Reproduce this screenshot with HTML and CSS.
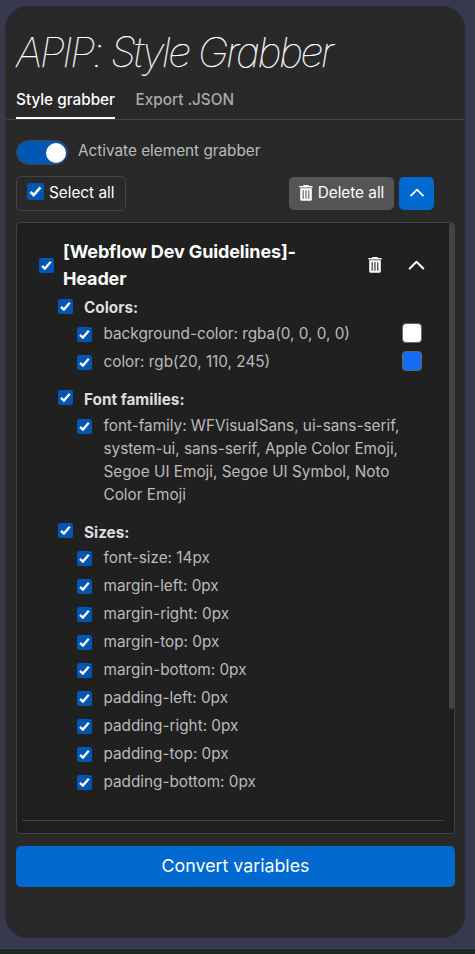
FILE: index.html
```html
<!DOCTYPE html>
<html lang="en">
<head>
<meta charset="utf-8">
<title>APIP: Style Grabber</title>
<link rel="stylesheet" href="styles.css">
</head>
<body>
<svg class="defs" width="0" height="0">
  <symbol id="check" viewBox="0 0 15 15"><path d="M3 7.8 5.9 10.6 11.8 3.8" fill="none" stroke="#fff" stroke-width="2.3"/></symbol>
  <symbol id="trash" viewBox="0 0 14 16"><path fill="currentColor" fill-rule="evenodd" d="M4.6 0h4.8l.6 1h3.1q.6 0 .6.6v.9H.3v-.9Q.3 1 .9 1H4zM1.2 3.3h11.6v11q0 1.5-1.5 1.5H2.7q-1.5 0-1.5-1.5zM3.6 5.3v8.4h1.1V5.3zm2.8 0v8.4h1.1V5.3zm2.8 0v8.4h1.1V5.3z"/></symbol>
  <symbol id="up" viewBox="0 0 16 10"><path d="M1.2 8.5 8 1.8l6.8 6.7" fill="none" stroke="currentColor" stroke-width="2" stroke-linecap="round" stroke-linejoin="round"/></symbol>
</svg>
<main class="card">
  <h1 class="title">APIP: Style Grabber</h1>
  <nav class="tabs"><a class="tab active">Style grabber</a><a class="tab">Export .JSON</a></nav>
  <div class="activate"><span class="switch"><i class="knob"></i></span><span>Activate element grabber</span></div>
  <div class="toolbar">
    <label class="select-all"><svg class="cb large"><use href="#check"/></svg>Select all</label>
    <button class="btn delete"><svg class="trash"><use href="#trash"/></svg>Delete all</button>
    <button class="btn collapse"><svg class="up"><use href="#up"/></svg></button>
  </div>
  <section class="panel">
    <div class="thumb"></div>
    <header class="item-head">
      <svg class="cb"><use href="#check"/></svg>
      <h2 class="item-name">[Webflow Dev Guidelines]-<br>Header</h2>
      <svg class="trash"><use href="#trash"/></svg>
      <svg class="up wide"><use href="#up"/></svg>
    </header>
    <h3 class="group"><svg class="cb"><use href="#check"/></svg><span>Colors:</span></h3>
    <div class="row"><svg class="cb"><use href="#check"/></svg><span class="text">background-color: rgba(0, 0, 0, 0)</span><i class="swatch white"></i></div>
    <div class="row"><svg class="cb"><use href="#check"/></svg><span class="text">color: rgb(20, 110, 245)</span><i class="swatch blue"></i></div>
    <h3 class="group spaced"><svg class="cb"><use href="#check"/></svg><span>Font families:</span></h3>
    <div class="row"><svg class="cb"><use href="#check"/></svg><span class="text">font-family: WFVisualSans, ui-sans-serif,<br>system-ui, sans-serif, Apple Color Emoji,<br>Segoe UI Emoji, Segoe UI Symbol, Noto<br>Color Emoji</span></div>
    <h3 class="group spaced sizes"><svg class="cb"><use href="#check"/></svg><span>Sizes:</span></h3>
    <div class="row"><svg class="cb"><use href="#check"/></svg><span class="text">font-size: 14px</span></div>
    <div class="row"><svg class="cb"><use href="#check"/></svg><span class="text">margin-left: 0px</span></div>
    <div class="row"><svg class="cb"><use href="#check"/></svg><span class="text">margin-right: 0px</span></div>
    <div class="row"><svg class="cb"><use href="#check"/></svg><span class="text">margin-top: 0px</span></div>
    <div class="row"><svg class="cb"><use href="#check"/></svg><span class="text">margin-bottom: 0px</span></div>
    <div class="row"><svg class="cb"><use href="#check"/></svg><span class="text">padding-left: 0px</span></div>
    <div class="row"><svg class="cb"><use href="#check"/></svg><span class="text">padding-right: 0px</span></div>
    <div class="row"><svg class="cb"><use href="#check"/></svg><span class="text">padding-top: 0px</span></div>
    <div class="row"><svg class="cb"><use href="#check"/></svg><span class="text">padding-bottom: 0px</span></div>
    <hr class="divider">
  </section>
  <button class="btn convert">Convert variables</button>
</main>
<footer class="strip"></footer>
</body>
</html>
```
FILE: styles.css
```css
* { box-sizing: border-box; }
body {
  margin: 0; height: 954px; padding: 6px 10px 0 5px; overflow: hidden;
  display: flex; flex-direction: column;
  background: #39394d; color: #bbb;
  font: 15.3px/23px Inter, "Liberation Sans", sans-serif;
}
.defs { position: absolute; }
svg { display: block; flex: none; }
.card {
  height: 932px; flex: none; padding: 21px 10px 0 11px; border-radius: 23px;
  background: #292929; box-shadow: 0 0 0 1px #2c2b3c inset;
}
.strip { margin: 10px -10px 0 -5px; height: 6px; flex: none; background: #1c2626; border-top: 1px solid #3b4447; }
.title {
  margin: 0; height: 51px; font-size: 41.3px; line-height: 50px; font-style: italic;
  font-weight: 100; letter-spacing: -2.55px; word-spacing: .5px; -webkit-text-stroke: .25px #fff;
  color: #fff; white-space: nowrap;
}
.tabs { display: flex; gap: 20.5px; height: 42px; margin: 0 -9px 0 -10px; padding: 10px 10px 0; border-bottom: 1px solid #444; }
.tab { height: 31px; font-weight: 500; color: #aaa; white-space: nowrap; }
.tab.active { color: #fff; border-bottom: 2px solid #fff; }
.activate { display: flex; gap: 10px; margin-top: 19px; height: 26px; }
.switch { width: 52px; height: 25px; margin-top: 1px; padding: 1px; border: 1px solid #444; border-radius: 13px; background: #0056b3; display: flex; justify-content: flex-end; align-items: center; }
.knob { width: 20px; height: 20px; border-radius: 50%; background: #fff; }
.toolbar { display: flex; align-items: center; height: 35px; margin: 11px 21px 0 0; color: #fff; }
.select-all { display: flex; align-items: center; gap: 5px; width: 110px; height: 35px; padding: 0 0 2px 10px; border: 1px solid #444; border-radius: 5px; white-space: nowrap; }
.btn { display: flex; align-items: center; justify-content: center; padding: 0; border: 0; border-radius: 5px; color: #fff; font: inherit; height: 33px; }
.delete { width: 105px; gap: 5px; margin-left: auto; background: #555; padding-bottom: 2px; }
.collapse { width: 35px; margin-left: 5px; background: #0069d0; padding-bottom: 3px; }
.cb { width: 15px; height: 15px; border-radius: 2px; background: #0056b3; }
.cb.large { width: 17px; height: 17px; margin-top: -2px; }
.trash { width: 14px; height: 16px; color: #fff; }
.up { width: 14px; height: 9px; color: #fff; }
.up.wide { width: 17px; height: 10px; }
.panel {
  position: relative; height: 612px; margin-top: 11px; padding: 15px 11px 0 5px;
  border: 1px solid #444; border-radius: 5px; background: #202020;
  box-shadow: inset 0 0 5px #1a1a1a;
}
.thumb { position: absolute; top: 0; right: 0; width: 5px; height: 486px; border-radius: 3px; background: #444; }
.item-head { display: flex; align-items: center; height: 54px; padding: 0 18px 0 17px; }
.item-name { margin: 0 auto 0 9px; font-size: 18px; line-height: 27px; font-weight: 700; letter-spacing: -.13px; color: #fff; white-space: nowrap; }
.item-head .trash { margin-right: 26px; }
.group { display: flex; gap: 11px; height: 28px; margin: 0; padding: 7px 0 0 36px; font-size: 15.3px; line-height: 19px; font-weight: 700; color: #ddd; }
.group.spaced { margin-top: 8px; }
.group.spaced .cb { margin-top: -1px; }
.group span { margin-top: -1px; }
.group.sizes span, .group.sizes .cb { margin-top: 0; }
.row { display: flex; gap: 11.5px; min-height: 28px; padding: 2px 21px 2px 55px; }
.row .cb { margin-top: 5px; }
.row .text { margin-right: auto; white-space: nowrap; }
.swatch { width: 20px; height: 20px; margin-top: 1px; border: 1px solid #666; border-radius: 4px; }
.swatch.white { background: #fff; }
.swatch.blue { background: #146ef5; }
.divider { height: 1px; margin: 24px 0 0; border: 0; background: #444; }
.convert { width: 439px; height: 41px; margin-top: 12px; padding-bottom: 2px; background: #0069d0; font-size: 17.8px; }
```
